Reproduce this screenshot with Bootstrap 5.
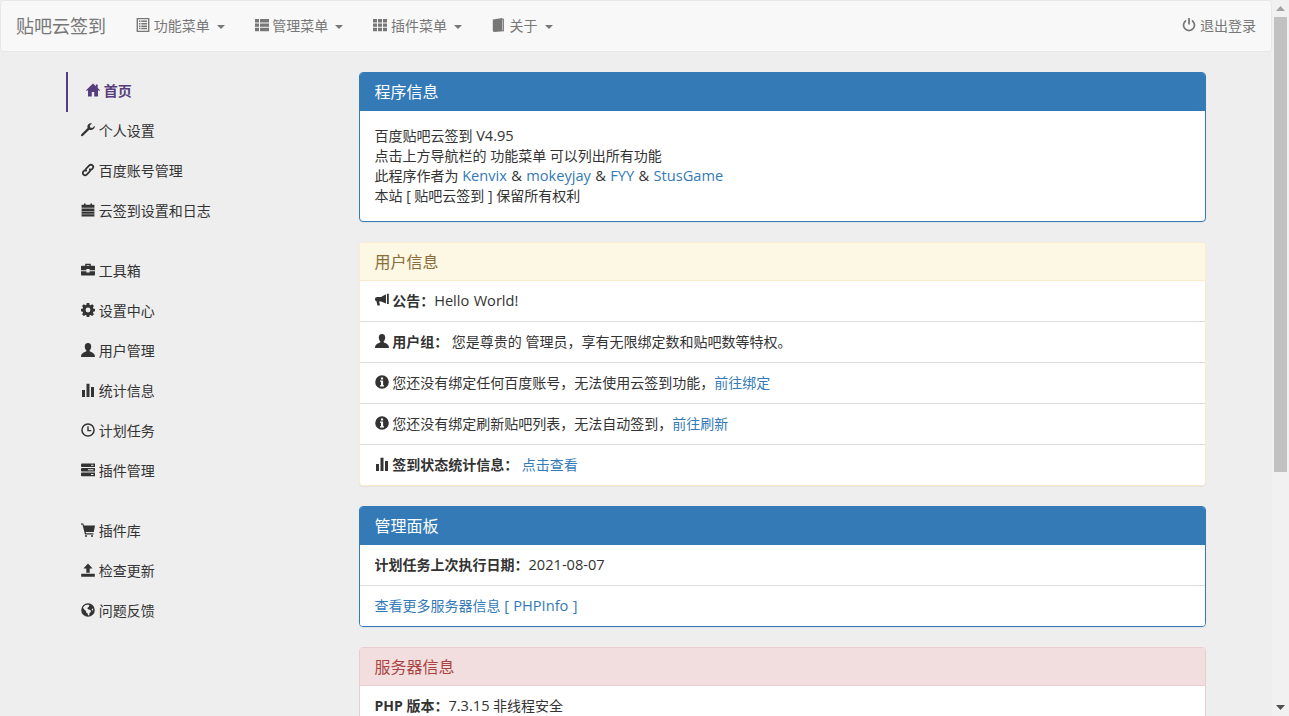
<!DOCTYPE html>
<html lang="zh-CN">
<head>
<meta charset="utf-8">
<title>贴吧云签到</title>
<link rel="stylesheet" href="https://cdn.jsdelivr.net/npm/bootstrap@5.3.0/dist/css/bootstrap.min.css">
<style>
body{background:#eee;color:#333;font:14px/20px "Open Sans","Noto Sans CJK SC",sans-serif}
a{color:#337ab7;text-decoration:none}
b,strong{font-weight:700}
.lat{font-size:14.6px;line-height:1;word-spacing:.6px}
.gi{width:14px;height:14px;fill:currentColor;display:inline-block;vertical-align:-1px}
.shell{height:100vh;overflow:hidden}
.scroller{flex:1 1 0;min-width:0;overflow-y:auto}
.sbar{width:17px;flex:none;background:#f1f1f1}
.sbar-btn{height:17px;flex:none}
.sbar-btn svg{display:block;margin:6px auto 0 4px}
.sbar-thumb{height:455px;margin:0 2px;background:#c1c1c1}
.topbar{background:#f8f8f8;border:1px solid #e7e7e7;border-radius:4px;min-height:52px;margin-bottom:20px;padding:0}
.topbar .container-fluid{padding:0;align-items:stretch}
.topbar .navbar-brand{font-size:18px;line-height:20px;color:#777;padding:15px;margin:0;height:50px}
.topbar.navbar-expand .navbar-nav .nav-link{color:#777;padding:15px;line-height:20px;height:50px;white-space:nowrap}
.topbar .dropdown-toggle::after{margin-left:7px;vertical-align:2px;border-top-width:4px;border-left-width:4px;border-right-width:4px}
.page-wrap{width:1170px;margin:0 auto}
.page-wrap>.row{margin-left:0;margin-right:0}
.side-col{width:25%;flex:0 0 auto;padding:0 15px}
.main-col{width:75%;flex:0 0 auto;padding:0 15px}
.side-nav{margin-bottom:20px}
.side-nav .nav-link{color:#333;padding:9px 15px 11px;line-height:20px;height:40px}
.side-nav .nav-link.active{color:#563d7c;font-weight:700;padding-left:18px;border-left:2px solid #563d7c}
.pane{margin-bottom:20px;background:#fff;box-shadow:0 1px 1px rgba(0,0,0,.05);--bs-card-border-radius:4px;--bs-card-inner-border-radius:3px}
.pane .card-header{padding:10px 15px;font-size:16px;line-height:18px;height:38px}
.pane .list-group-item{padding:10px 15px;line-height:20px;color:#333;border-color:#ddd;height:41px;white-space:nowrap}
.pane .card-body{padding:15px;color:#333}
.pane-blue{border:1px solid #337ab7}
.pane-blue .card-header{background:#337ab7;color:#fff;border-color:#337ab7}
.pane-yellow{border:1px solid #faebcc}
.pane-yellow .card-header{background:#fcf8e3;color:#8a6d3b;border-color:#faebcc}
.pane-red{border:1px solid #ebccd1}
.pane-red .card-header{background:#f2dede;color:#a94442;border-color:#ebccd1}
.pane .list-group-item:last-child{height:40px}
</style>
</head>
<body>
<svg width="0" height="0" class="d-none" aria-hidden="true">
<symbol id="i-list-alt" viewBox="0 0 14 14"><path fill-rule="evenodd" d="M.6 0h12.800v14H.6zM2 1.300v11.400h10V1.300zM3 2.600h1.500v1.500H3zM5.300 2.600H11v1.500H5.300zM3 5h1.500v1.500H3zM5.300 5H11v1.500H5.300zM3 7.400h1.500v1.500H3zM5.300 7.400H11v1.500H5.300zM3 9.800h1.500v1.500H3zM5.300 9.800H11v1.500H5.300z"/></symbol>
<symbol id="i-th-list" viewBox="0 0 14 14"><path d="M0 1h4v3.400H0zM5 1h9v3.400H5zM0 5.400h4v3.400H0zM5 5.400h9v3.400H5zM0 9.800h4v3.400H0zM5 9.800h9v3.400H5z"/></symbol>
<symbol id="i-th" viewBox="0 0 14 14"><path d="M0 1h4v3.400H0zM5 1h4v3.400H5zM10 1h4v3.400h-4zM0 5.400h4v3.400H0zM5 5.400h4v3.400H5zM10 5.400h4v3.400h-4zM0 9.800h4v3.400H0zM5 9.800h4v3.400H5zM10 9.800h4v3.400h-4z"/></symbol>
<symbol id="i-book" viewBox="0 0 14 14"><path d="M.8 1.400 10.400 0v.8H12v12.400L2.200 14C1.300 14 .8 13.400.8 12.600z"/><path fill="#f8f8f8" d="M10.500 1.600h.6v10.800l-.6.1z"/></symbol>
<symbol id="i-off" viewBox="0 0 14 14"><path d="M6.100 0h1.800v6.600H6.100z"/><path d="M4.200 1.500v2a4.600 4.600 0 1 0 5.600 0v-2a6.300 6.300 0 1 1-5.600 0z"/></symbol>
<symbol id="i-home" viewBox="0 0 14 14"><path d="M7 .6 0 7.200l.9.800L2 7V13.400h3.800V9h2.400v4.400H12V7l1.100 1 .9-.8-2.300-2.200V1.600H9.900v1.600z"/></symbol>
<symbol id="i-wrench" viewBox="0 0 14 14"><path d="M13.700 2.800 11.300 5 9.200 4.600 8.800 2.600 11 .4C8.600-.4 6.200 1.400 6.400 4c0 .4.100.7.200 1L.7 10.900c-.9.900-.9 1.500-.4 2s1.200.5 2-.3L8.200 6.700c2.900.8 6-1 5.500-3.900z"/></symbol>
<symbol id="i-link" viewBox="0 0 14 14"><path fill="none" stroke="currentColor" stroke-width="1.800" d="M5.600 8.400c-1-1-1-2.200-.2-3l2.900-3c.9-.9 2.300-.9 3.200 0s.9 2.300 0 3.200L10 7.100M8.400 5.600c1 1 1 2.200.2 3l-2.900 3c-.9.900-2.300.9-3.200 0s-.9-2.300 0-3.200L4 6.900"/></symbol>
<symbol id="i-cal" viewBox="0 0 14 14"><path d="M3 .4h1.600v1.400H9.400V.4H11v1.400h2.400V4.800H.6V1.800H3zM.6 5.500h12.800v8H.6z"/><path fill="#eee" d="M.6 8.100h12.800v.5H.6zM.6 10.700h12.800v.5H.6z"/></symbol>
<symbol id="i-case" viewBox="0 0 14 14"><path d="M4.200 2.800V.8h5.600v2H13c.6 0 1 .4 1 1v3.400H8.600V6H5.400v1.200H0V3.800c0-.6.4-1 1-1zM5.600 2v.8h2.800V2zM0 8.200h5.400v1.200h3.200V8.200H14v3.400c0 .6-.4 1-1 1H1c-.6 0-1-.4-1-1z"/></symbol>
<symbol id="i-cog" viewBox="0 0 14 14"><path fill-rule="evenodd" d="M5.700 0h2.600l.3 1.900 1 .4L11.200 1.200 13 3l-1.100 1.600.4 1 1.700.3v2.400l-1.700.4-.4 1L13 11.200 11.200 13l-1.600-1.100-1 .4-.3 1.700H5.700l-.3-1.700-1-.4L2.800 13 1 11.200l1.100-1.500-.4-1L0 8.300V5.900l1.700-.3.400-1L1 3l1.800-1.800 1.600 1.100 1-.4zM7 4.600a2.400 2.400 0 1 0 0 4.800 2.400 2.400 0 0 0 0-4.800z"/></symbol>
<symbol id="i-user" viewBox="0 0 14 14"><path d="M7 0c2.200 0 3.200 1.500 3.200 3.400 0 1.600-.7 3.100-1.500 3.900v1C9.800 9.200 14 9.700 14 14H0C0 9.700 4.200 9.200 5.300 8.300v-1C4.500 6.500 3.800 5 3.800 3.400 3.800 1.500 4.800 0 7 0z"/></symbol>
<symbol id="i-stats" viewBox="0 0 14 14"><path d="M1 7h3v7H1zM5.500 .8h3V14h-3zM10 4h3v10h-3z"/></symbol>
<symbol id="i-time" viewBox="0 0 14 14"><path fill-rule="evenodd" d="M7 .2a6.800 6.800 0 1 1 0 13.600A6.800 6.800 0 0 1 7 .2zm0 1.500a5.300 5.300 0 1 0 0 10.600A5.300 5.300 0 0 0 7 1.700z"/><path d="M6.300 3.200h1.400V7h2.600v1.300h-4z"/></symbol>
<symbol id="i-tasks" viewBox="0 0 14 14"><path fill-rule="evenodd" d="M1 .4h13v3.600H1a1 1 0 0 1-1-1V1.400a1 1 0 0 1 1-1zM10 1.700v1h2.500v-1zM1 5h13v3.600H1a1 1 0 0 1-1-1V6a1 1 0 0 1 1-1zM7 6.300v1h5.500v-1zM1 9.600h13v3.600H1a1 1 0 0 1-1-1v-1.600a1 1 0 0 1 1-1zM10 10.900v1h2.500v-1z"/></symbol>
<symbol id="i-cart" viewBox="0 0 14 14"><path d="M0 .2l2.400.5.500 1.800H14l-1.200 6.500H4.700l.3 1.200h7.500v1.200H4L1.500 1.700 0 1.400z"/><circle cx="5" cy="13" r="1"/><circle cx="11" cy="13" r="1"/></symbol>
<symbol id="i-open" viewBox="0 0 14 14"><path d="M7 .4l4.600 5H8.700v4.400H5.300V5.400H2.400zM.2 10.800h13.600v3H.2z"/></symbol>
<symbol id="i-globe" viewBox="0 0 14 14"><path fill-rule="evenodd" d="M7 .2a6.800 6.800 0 1 1 0 13.600A6.800 6.800 0 0 1 7 .2zM5.800 1.700C4.200 2 2.900 3.100 2.100 4.500c.5 1.800 1.700 2.500 2.700 3.200l.5 2 1 .3.800 2.300c.3.100.8.100 1.300 0-.3-1.100 0-2 .8-2.700.9-.7 1.200-1.700 0-2.500-1-.6-2-.6-2.600-1.400-.3-.5 0-1.100.5-1.400.7-.4 1.200-1 1.100-2.400-.9-.3-1.800-.3-2.700-.2zm6 3.700c-.6.100-1.100.5-1.100 1.100.1.700.8 1 1.500 1 0-.7 0-1.400-.4-2.100z"/></symbol>
<symbol id="i-horn" viewBox="0 0 14 14"><path d="M12 .8h1.800v10.200H12zM11 1.300v9.200L6 8.400H4.100l.8 3.400c.1.500-.2.800-.6.800H3c-.4 0-.6-.2-.7-.6L1.500 8.300C.6 8.100 0 7.300 0 6.200c0-1.300 1-2.200 2.200-2.200H6z"/></symbol>
<symbol id="i-info" viewBox="0 0 14 14"><path fill-rule="evenodd" d="M7 .2a6.800 6.800 0 1 1 0 13.600A6.800 6.800 0 0 1 7 .2zM5.900 2.500v2h2.200v-2zM5 5.500v1.200h1v3.600H5v1.200h4v-1.200H8.100V5.500z"/></symbol>
</svg>

<div class="shell d-flex">
<div class="scroller">
<nav class="navbar navbar-expand topbar">
<div class="container-fluid">
<a class="navbar-brand" href="#">贴吧云签到</a>
<ul class="navbar-nav me-auto">
<li class="nav-item dropdown"><a class="nav-link dropdown-toggle" href="#" data-bs-toggle="dropdown"><svg class="gi"><use href="#i-list-alt"/></svg> 功能菜单</a>
<ul class="dropdown-menu"><li><a class="dropdown-item" href="#">云签到设置和日志</a></li></ul></li>
<li class="nav-item dropdown"><a class="nav-link dropdown-toggle" href="#" data-bs-toggle="dropdown"><svg class="gi"><use href="#i-th-list"/></svg> 管理菜单</a>
<ul class="dropdown-menu"><li><a class="dropdown-item" href="#">设置中心</a></li></ul></li>
<li class="nav-item dropdown"><a class="nav-link dropdown-toggle" href="#" data-bs-toggle="dropdown"><svg class="gi"><use href="#i-th"/></svg> 插件菜单</a>
<ul class="dropdown-menu"><li><a class="dropdown-item" href="#">插件库</a></li></ul></li>
<li class="nav-item dropdown"><a class="nav-link dropdown-toggle" href="#" data-bs-toggle="dropdown"><svg class="gi"><use href="#i-book"/></svg> 关于</a>
<ul class="dropdown-menu"><li><a class="dropdown-item" href="#">问题反馈</a></li></ul></li>
</ul>
<ul class="navbar-nav"><li class="nav-item"><a class="nav-link" href="#"><svg class="gi"><use href="#i-off"/></svg> 退出登录</a></li></ul>
</div>
</nav>

<div class="page-wrap">
<div class="row">
<div class="side-col">
<ul class="nav flex-column side-nav">
<li class="nav-item"><a class="nav-link active" href="#"><svg class="gi"><use href="#i-home"/></svg> 首页</a></li>
<li class="nav-item"><a class="nav-link" href="#"><svg class="gi"><use href="#i-wrench"/></svg> 个人设置</a></li>
<li class="nav-item"><a class="nav-link" href="#"><svg class="gi"><use href="#i-link"/></svg> 百度账号管理</a></li>
<li class="nav-item"><a class="nav-link" href="#"><svg class="gi"><use href="#i-cal"/></svg> 云签到设置和日志</a></li>
</ul>
<ul class="nav flex-column side-nav">
<li class="nav-item"><a class="nav-link" href="#"><svg class="gi"><use href="#i-case"/></svg> 工具箱</a></li>
<li class="nav-item"><a class="nav-link" href="#"><svg class="gi"><use href="#i-cog"/></svg> 设置中心</a></li>
<li class="nav-item"><a class="nav-link" href="#"><svg class="gi"><use href="#i-user"/></svg> 用户管理</a></li>
<li class="nav-item"><a class="nav-link" href="#"><svg class="gi"><use href="#i-stats"/></svg> 统计信息</a></li>
<li class="nav-item"><a class="nav-link" href="#"><svg class="gi"><use href="#i-time"/></svg> 计划任务</a></li>
<li class="nav-item"><a class="nav-link" href="#"><svg class="gi"><use href="#i-tasks"/></svg> 插件管理</a></li>
</ul>
<ul class="nav flex-column side-nav">
<li class="nav-item"><a class="nav-link" href="#"><svg class="gi"><use href="#i-cart"/></svg> 插件库</a></li>
<li class="nav-item"><a class="nav-link" href="#"><svg class="gi"><use href="#i-open"/></svg> 检查更新</a></li>
<li class="nav-item"><a class="nav-link" href="#"><svg class="gi"><use href="#i-globe"/></svg> 问题反馈</a></li>
</ul>
</div>
<div class="main-col">
<div class="card pane pane-blue">
<div class="card-header">程序信息</div>
<div class="card-body">百度贴吧云签到 <span class="lat">V4.95</span><br>点击上方导航栏的 功能菜单 可以列出所有功能<br>此程序作者为 <span class="lat"><a href="#">Kenvix</a> &amp; <a href="#">mokeyjay</a> &amp; <a href="#">FYY</a> &amp; <a href="#">StusGame</a></span><br>本站 [ 贴吧云签到 ] 保留所有权利</div>
</div>
<div class="card pane pane-yellow">
<div class="card-header">用户信息</div>
<ul class="list-group list-group-flush">
<li class="list-group-item"><svg class="gi"><use href="#i-horn"/></svg> <b>公告：</b><span class="lat">Hello World!</span></li>
<li class="list-group-item"><svg class="gi"><use href="#i-user"/></svg> <b>用户组：</b> 您是尊贵的 管理员，享有无限绑定数和贴吧数等特权。</li>
<li class="list-group-item"><svg class="gi"><use href="#i-info"/></svg> 您还没有绑定任何百度账号，无法使用云签到功能，<a href="#">前往绑定</a></li>
<li class="list-group-item"><svg class="gi"><use href="#i-info"/></svg> 您还没有绑定刷新贴吧列表，无法自动签到，<a href="#">前往刷新</a></li>
<li class="list-group-item"><svg class="gi"><use href="#i-stats"/></svg> <b>签到状态统计信息：</b> <a href="#">点击查看</a></li>
</ul>
</div>
<div class="card pane pane-blue">
<div class="card-header">管理面板</div>
<ul class="list-group list-group-flush">
<li class="list-group-item"><b>计划任务上次执行日期：</b><span class="lat">2021-08-07</span></li>
<li class="list-group-item"><a href="#">查看更多服务器信息 <span class="lat">[ PHPInfo ]</span></a></li>
</ul>
</div>
<div class="card pane pane-red">
<div class="card-header">服务器信息</div>
<ul class="list-group list-group-flush">
<li class="list-group-item"><b>PHP 版本：</b><span class="lat">7.3.15</span> 非线程安全</li>
</ul>
</div>
</div>
</div>
</div>
</div>
<div class="sbar d-flex flex-column" aria-hidden="true">
<div class="sbar-btn"><svg width="9" height="5"><path d="M4.500 0 9 5H0z" fill="#a3a3a3"/></svg></div>
<div class="sbar-thumb"></div>
<div class="flex-grow-1"></div>
<div class="sbar-btn"><svg width="9" height="5"><path d="M4.500 5 9 0H0z" fill="#505050"/></svg></div>
</div>
</div>
<script src="https://cdn.jsdelivr.net/npm/bootstrap@5.3.0/dist/js/bootstrap.bundle.min.js"></script>
</body>
</html>
